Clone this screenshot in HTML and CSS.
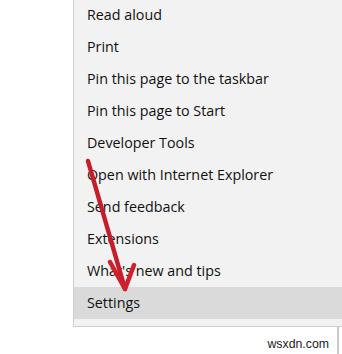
FILE: index.html
```html
<!DOCTYPE html>
<html>
<head>
<meta charset="utf-8">
<link rel="stylesheet" href="styles.css">
</head>
<body>
<div class="page">
  <ul class="menu">
    <li class="item">Read aloud</li>
    <li class="item">Print</li>
    <li class="item">Pin this page to the taskbar</li>
    <li class="item">Pin this page to Start</li>
    <li class="item">Developer Tools</li>
    <li class="item">Open with Internet Explorer</li>
    <li class="item">Send feedback</li>
    <li class="item">Extensions</li>
    <li class="item">What's new and tips</li>
    <li class="item active">Settings</li>
  </ul>
  <div class="footer">
    <span class="watermark">wsxdn.com</span>
    <span class="edge"></span>
  </div>
  <svg class="arrow" width="342" height="354" viewBox="0 0 342 354">
    <path d="M88 161 L125 289" stroke="#c41e2a" stroke-width="4.5" stroke-linecap="round" fill="none"/>
    <path d="M110 262 L125 289 L134 265" stroke="#d0202c" stroke-width="4.5" stroke-linecap="round" stroke-linejoin="round" fill="none"/>
  </svg>
</div>
</body>
</html>
```
FILE: styles.css
```css
html, body {
  margin: 0;
  padding: 0;
  background: #ffffff;
}
.page {
  position: relative;
  width: 342px;
  height: 354px;
  overflow: hidden;
  font-family: "Open Sans", "Noto Sans", sans-serif;
}
.menu {
  list-style: none;
  margin: -1px 0 0 73px;
  padding: 0 0 7px 0;
  background: #f2f2f2;
  border-left: 1px solid #cfcfcf;
  border-bottom: 1px solid #cfcfcf;
}
.item {
  height: 32px;
  line-height: 32px;
  padding-left: 13px;
  font-size: 14.3px;
  color: #111111;
  white-space: nowrap;
}
.item.active {
  background: #dadada;
}
.footer {
  display: flex;
  justify-content: flex-end;
  align-items: flex-start;
  height: 28px;
}
.watermark {
  font-family: "Liberation Sans", Arial, sans-serif;
  font-size: 12.3px;
  color: #222222;
  margin-top: 10px;
  margin-right: 8px;
}
.edge {
  width: 2px;
  height: 28px;
  background: #c8c8c8;
  margin-right: 3px;
}
.arrow {
  position: absolute;
  left: 0;
  top: 0;
  pointer-events: none;
}
```
